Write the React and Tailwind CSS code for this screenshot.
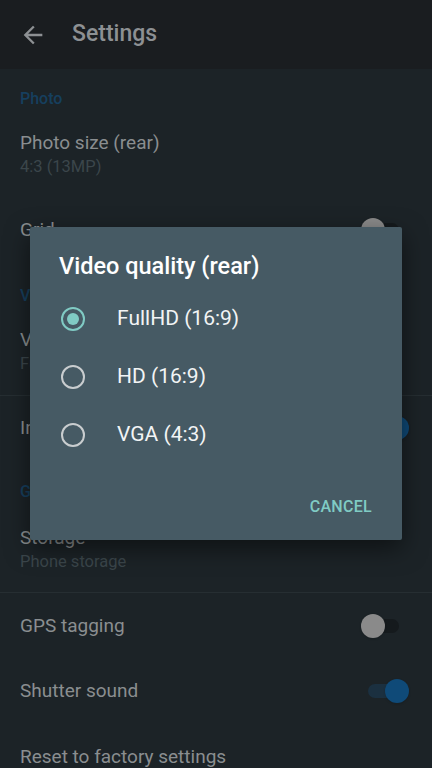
import { useState } from "react";

const options = ["FullHD (16:9)", "HD (16:9)", "VGA (4:3)"];

function Switch({ on }) {
  // dimmed behind the dialog scrim
  return on ? (
    <div className="relative w-[48px] h-[24px] flex items-center">
      <div className="absolute left-[7px] w-[32px] h-[14px] rounded-full bg-[#1b3040]"></div>
      <div className="absolute left-[24px] w-[24px] h-[24px] rounded-full bg-[#0f4a78] shadow"></div>
    </div>
  ) : (
    <div className="relative w-[48px] h-[24px] flex items-center">
      <div className="absolute left-[5px] w-[33px] h-[14px] rounded-full bg-[#151a1d]"></div>
      <div className="absolute left-0 w-[24px] h-[24px] rounded-full bg-[#8a8a8a] shadow"></div>
    </div>
  );
}

function Header({ text, className }) {
  return (
    <div className={"px-5 h-[44px] " + className}>
      <div className="text-[16px] leading-[18px] font-medium text-[#163f5e]">{text}</div>
    </div>
  );
}

function TwoLine({ title, sub, className }) {
  return (
    <div className={"px-5 " + className}>
      <div className="text-[19px] leading-[22px] text-[#8a8e90]">{title}</div>
      <div className="mt-[3px] text-[16.5px] leading-[20px] text-[#3b464b]">{sub}</div>
    </div>
  );
}

function SwitchRow({ title, on, className }) {
  return (
    <div className={"pl-5 pr-[23px] flex items-center justify-between " + className}>
      <div className="text-[19px] leading-[22px] text-[#8a8e90]">{title}</div>
      <Switch on={on} />
    </div>
  );
}

function Radio({ checked }) {
  return (
    <div
      className={
        "w-[24px] h-[24px] rounded-full border-2 flex items-center justify-center " +
        (checked ? "border-[#80cbc4]" : "border-[#c9cdcf]")
      }
    >
      {checked && <div className="w-[12px] h-[12px] rounded-full bg-[#80cbc4]"></div>}
    </div>
  );
}

export default function App() {
  const [selected, setSelected] = useState(0);

  return (
    <div
      className="relative w-[432px] h-[768px] overflow-hidden bg-[#1c2327]"
      style={{ fontFamily: "Roboto, 'Noto Sans', sans-serif" }}
    >
      {/* app bar */}
      <div className="h-[69px] bg-[#1a1d20] flex items-center">
        <svg className="ml-[19px] mt-[1px]" width="28" height="28" viewBox="0 0 24 24" fill="#8d9093">
          <path d="M20 11H7.83l5.59-5.59L12 4l-8 8 8 8 1.41-1.41L7.83 13H20v-2z" />
        </svg>
        <div className="ml-[25px] text-[23px] font-medium text-[#8d9093]">Settings</div>
      </div>

      {/* settings list */}
      <Header text="Photo" className="pt-[21px]" />
      <TwoLine title="Photo size (rear)" sub="4:3 (13MP)" className="h-[85px] pt-[19px]" />
      <SwitchRow title="Grid" on={false} className="h-[64px]" />
      <Header text="Video" className="pt-[25px]" />
      <TwoLine title="Video quality (rear)" sub="FullHD (16:9)" className="h-[89px] pt-[23px]" />
      <div className="h-px bg-[#262e32]"></div>
      <SwitchRow title="Instant capture" on={true} className="h-[64px]" />
      <Header text="General" className="pt-[23px]" />
      <TwoLine title="Storage" sub="Phone storage" className="h-[88px] pt-[23px]" />
      <div className="h-px bg-[#262e32]"></div>
      <SwitchRow title="GPS tagging" on={false} className="h-[66px]" />
      <SwitchRow title="Shutter sound" on={true} className="h-[64px]" />
      <div className="px-5 h-[68px] flex items-center">
        <div className="text-[19px] leading-[22px] text-[#8a8e90]">Reset to factory settings</div>
      </div>

      {/* dialog */}
      <div className="absolute left-[30px] top-[227px] w-[372px] h-[313px] bg-[#465a64] rounded-[2px] shadow-[0_8px_24px_rgba(0,0,0,0.5)]">
        <div className="pl-[29px] pt-[24px] text-[23.5px] leading-[30px] font-medium text-white">
          Video quality (rear)
        </div>
        <div className="mt-[9px]">
          {options.map((o, i) => (
            <div
              key={o}
              className="h-[58px] pl-[31px] flex items-center gap-[32px] cursor-pointer"
              onClick={() => setSelected(i)}
            >
              <Radio checked={selected === i} />
              <div className="text-[21px] text-[#f2f4f5]">{o}</div>
            </div>
          ))}
        </div>
        <div className="mt-[33px] pr-[30px] flex justify-end">
          <div className="text-[16px] leading-[20px] font-medium text-[#80cbc4] tracking-[0.3px]">CANCEL</div>
        </div>
      </div>
    </div>
  );
}
